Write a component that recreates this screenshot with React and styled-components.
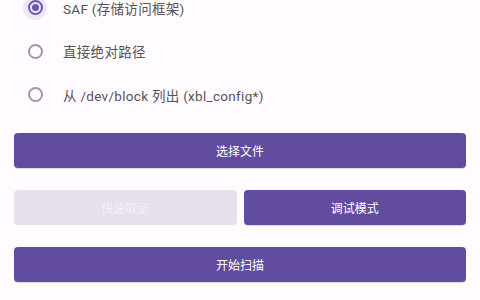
import React from "react"
import styled, { createGlobalStyle } from "styled-components"

const Global = createGlobalStyle`
html, body {
  margin: 0;
  padding: 0;
  background: #fffbfe;
  overflow: hidden;
}
body {
  font-family: Roboto, "Noto Sans CJK SC", sans-serif;
}
`

const options = [
  { label: "SAF (存储访问框架)", checked: true },
  { label: "直接绝对路径", checked: false },
  { label: "从 /dev/block 列出 (xbl_config*)", checked: false },
]

const App = () => {
  return (
    <Page>
      <Global />
      <List>
        {options.map((o) => (
          <Row key={o.label}>
            <RadioHolder checked={o.checked}>
              <Radio checked={o.checked}>{o.checked && <Dot />}</Radio>
            </RadioHolder>
            <Label>{o.label}</Label>
          </Row>
        ))}
      </List>
      <Buttons>
        <Button>选择文件</Button>
        <Pair>
          <Button disabled>快速取证</Button>
          <Button>调试模式</Button>
        </Pair>
        <Button>开始扫描</Button>
      </Buttons>
    </Page>
  )
}
export default App

const Page = styled.div`
width: 480px;
height: 300px;
overflow: hidden;
padding: 0 14px;
box-sizing: border-box;
`
const List = styled.div`
margin-top: -14px;
display: flex;
flex-direction: column;
`
const Row = styled.div`
height: 43.5px;
display: flex;
align-items: center;
`
const RadioHolder = styled.div`
width: 24px;
height: 24px;
margin-left: 9px;
border-radius: 50%;
display: flex;
align-items: center;
justify-content: center;
background: ${({ checked }) => (checked ? "#ece6f5" : "transparent")};
`
const Radio = styled.div`
width: 15px;
height: 15px;
box-sizing: border-box;
border-radius: 50%;
border: 2px solid ${({ checked }) => (checked ? "#6c58ab" : "#9e99a3")};
display: flex;
align-items: center;
justify-content: center;
`
const Dot = styled.div`
width: 7px;
height: 7px;
border-radius: 50%;
background: #6c58ab;
`
const Label = styled.div`
margin-left: 16px;
font-size: 13.5px;
color: #57535c;
letter-spacing: 0.3px;
`
const Buttons = styled.div`
margin-top: 16.5px;
display: flex;
flex-direction: column;
gap: 22px;
`
const Pair = styled.div`
display: flex;
gap: 7px;
& > * { flex: 1; }
`
const Button = styled.button`
height: 35px;
border: none;
border-radius: 4px;
font-family: Roboto, "Noto Sans CJK SC", sans-serif;
font-size: 12px;
color: ${({ disabled }) => (disabled ? "#f4f0f8" : "#ffffff")};
background: ${({ disabled }) => (disabled ? "#e5e0ea" : "#614ca0")};
box-shadow: ${({ disabled }) => (disabled ? "none" : "0 1px 1px rgba(0,0,0,0.15)")};
padding: 0;
`
